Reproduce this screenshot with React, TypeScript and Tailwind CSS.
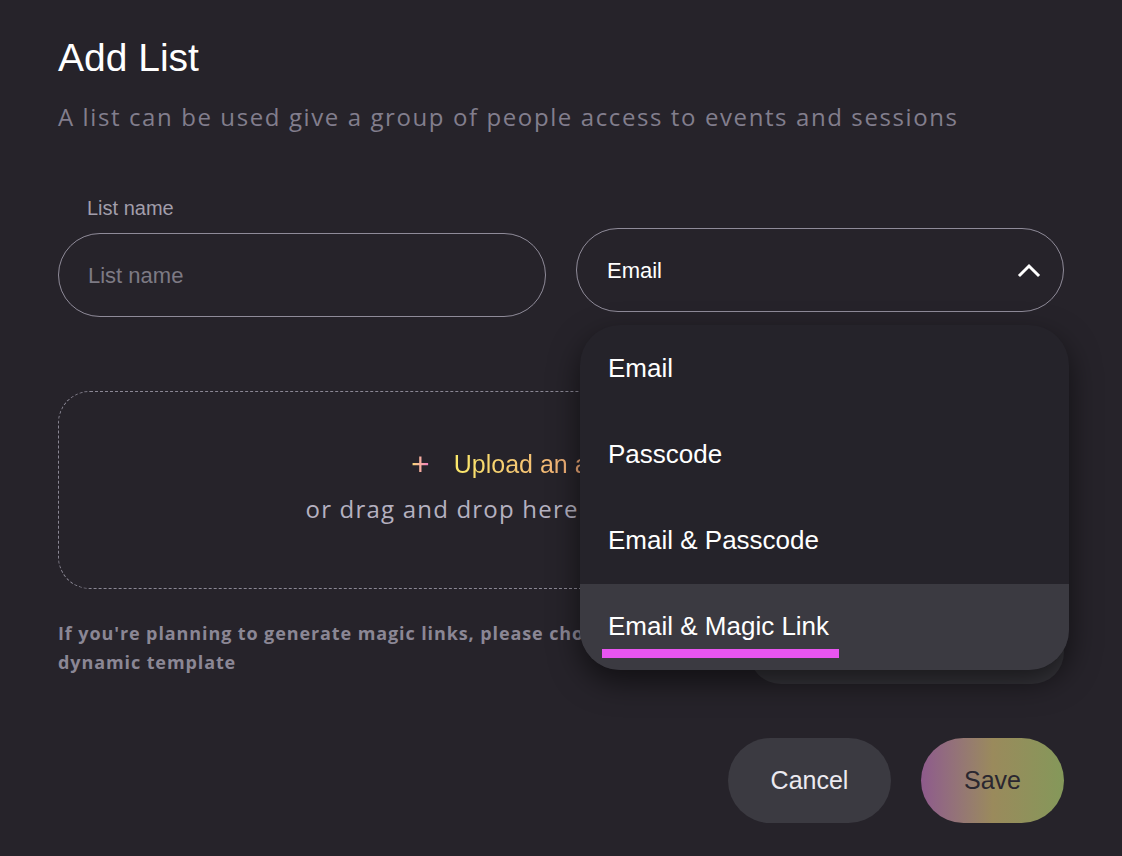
import React from "react";

const options = ["Email", "Passcode", "Email & Passcode", "Email & Magic Link"];

const sans = "font-['Liberation_Sans',Arial,sans-serif]";
const round = "font-['Open_Sans',sans-serif]";

export default function App() {
  return (
    <div className="relative min-h-[856px] w-full bg-[#26232a] px-[58px] pt-[32px] text-white">
      <h1 className={`${sans} text-[39px] leading-[52px] text-white`}>Add List</h1>
      <p className={`${round} mt-[15px] text-[24px] leading-[36px] tracking-[1.6px] text-[#827e8d]`}>
        A list can be used give a group of people access to events and sessions
      </p>

      <div className="mt-[61px] grid grid-cols-2 gap-[30px]">
        <div className="flex flex-col">
          <label className={`${sans} pl-[29px] text-[20px] leading-[24px] text-[#a29eab]`}>List name</label>
          <div className="mt-[13px] flex h-[84px] items-center rounded-full border border-[#8f8b99] pl-[29px]">
            <span className={`${sans} text-[22px] text-[#7d7a84]`}>List name</span>
          </div>
        </div>
        <div className="pt-[32px]">
          <div className="flex h-[84px] items-center justify-between rounded-full border border-[#8f8b99] pl-[30px] pr-[22px]">
            <span className={`${sans} text-[22px] text-white`}>Email</span>
            <svg width="24" height="16" viewBox="0 0 24 16" fill="none">
              <polyline points="3,13 12,4 21,13" stroke="white" strokeWidth="3" strokeLinecap="square" />
            </svg>
          </div>
        </div>
      </div>

      <div className="mt-[74px] flex h-[198px] flex-col items-center justify-center rounded-[32px] border border-dashed border-[#8a8794] pb-[6px]">
        <div className={`${sans} flex items-center gap-[24px] text-[25px] leading-[30px]`}>
          <span className="bg-gradient-to-r from-[#f8e06a] to-[#f06fc0] bg-clip-text text-[32px] font-light text-transparent">+</span>
          <span className="bg-gradient-to-r from-[#fbe96a] via-[#f0a878] to-[#e27ab0] bg-clip-text text-transparent">
            Upload an attendee file
          </span>
        </div>
        <p className={`${round} mt-[14px] text-[24px] leading-[32px] tracking-[1.2px] text-[#b5b1c0]`}>
          or drag and drop here a CSV of attendees
        </p>
      </div>

      <div className="mt-[30px] flex items-start justify-between">
        <p className={`${round} w-[662px] text-[18px] font-bold leading-[29px] tracking-[0.9px] text-[#8b8795]`}>
          If you're planning to generate magic links, please choose a dynamic template
        </p>
        <div className="mt-[1px] h-[64px] w-[315px] rounded-full bg-[#36353b]" />
      </div>

      <div className="mt-[54px] flex justify-end gap-[30px]">
        <button className={`${sans} h-[85px] w-[163px] rounded-full bg-[#3b3a41] text-[25px] text-[#eceaf0]`}>Cancel</button>
        <button
          className={`${sans} h-[85px] w-[143px] rounded-full bg-gradient-to-r from-[#8e5a8c] via-[#9a8a5c] to-[#84985a] text-[25px] text-[#2a2730]`}
        >
          Save
        </button>
      </div>

      <div className="absolute left-[580px] top-[325px] w-[489px] overflow-hidden rounded-[40px] bg-[#25232a] shadow-[0_12px_30px_rgba(0,0,0,0.55)]">
        {options.map((o, i) => (
          <div
            key={o}
            className={`relative flex h-[86.25px] items-center pl-[28px] ${i === 3 ? "bg-[#3b3a41]" : ""}`}
          >
            <span className={`${sans} text-[26px] text-white`}>{o}</span>
            {i === 3 && <div className="absolute bottom-[12px] left-[22px] h-[9px] w-[237px] bg-[#e855f0]" />}
          </div>
        ))}
      </div>
    </div>
  );
}
